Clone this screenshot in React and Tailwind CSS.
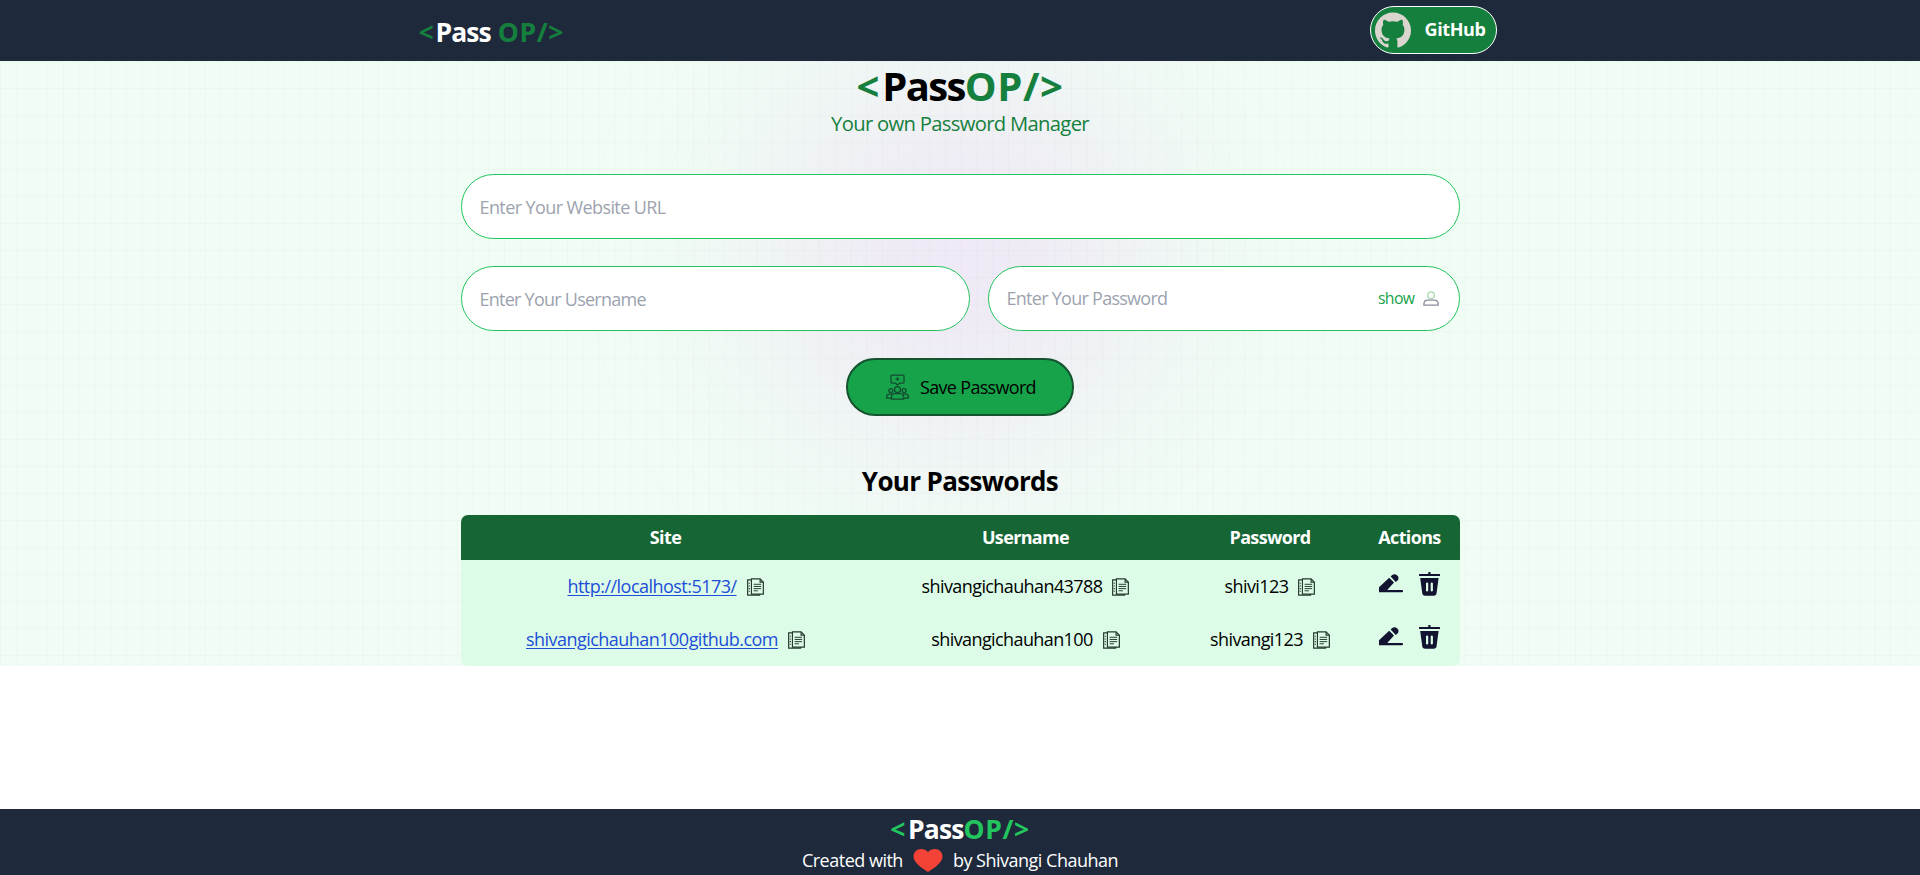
import React from "react";

const GITHUB =
  "M12 .297c-6.63 0-12 5.373-12 12 0 5.303 3.438 9.8 8.205 11.385.6.113.82-.258.82-.577 0-.285-.01-1.04-.015-2.04-3.338.724-4.042-1.61-4.042-1.61C4.422 18.07 3.633 17.7 3.633 17.7c-1.087-.744.084-.729.084-.729 1.205.084 1.838 1.236 1.838 1.236 1.07 1.835 2.809 1.305 3.495.998.108-.776.417-1.305.76-1.605-2.665-.3-5.466-1.332-5.466-5.93 0-1.31.465-2.38 1.235-3.22-.135-.303-.54-1.523.105-3.176 0 0 1.005-.322 3.3 1.23.96-.267 1.98-.399 3-.405 1.02.006 2.04.138 3 .405 2.28-1.552 3.285-1.23 3.285-1.23.645 1.653.24 2.873.12 3.176.765.84 1.23 1.91 1.23 3.22 0 4.61-2.805 5.625-5.475 5.92.42.36.81 1.096.81 2.22 0 1.606-.015 2.896-.015 3.286 0 .315.21.69.825.57C20.565 22.092 24 17.592 24 12.297c0-6.627-5.373-12-12-12";

function CopyIcon() {
  return (
    <svg className="h-[18px] w-[17px] shrink-0" viewBox="0.400 0.800 15.700 16.400" fill="none" stroke="#26392f" strokeWidth="1.100">
      <path d="M4.500 1.500h8l3 3v11h-11z" />
      <path d="M12.500 1.500v3h3M4.500 2.500h-3.500v14h11v-1" />
      <path d="M6.500 6.500h7M6.500 8.500h7M6.500 10.500h7M6.500 12.500h4" strokeWidth=".9" />
      <path d="M2.500 5v10" strokeDasharray="1 1.500" />
    </svg>
  );
}

function EditIcon() {
  return (
    <svg className="h-[19px] w-6" viewBox="0 0 24 19" fill="#121331">
      <path d="M0 13.300 10.200 3.700 15 8.400 8.200 16H23a1 1 0 0 1 0 2.300H0z" />
      <path d="M11.600 2.500 13.200 1.100A3.900 3.900 0 0 1 19 6l-2.200 1.900z" />
    </svg>
  );
}

function TrashIcon() {
  return (
    <svg className="h-6 w-[21px]" viewBox="0 0 21 24" fill="#121331">
      <path d="M9.200 2V1a1.200 1.200 0 0 1 2.400 0v1H20.300a.9.9 0 0 1 0 2.100H.7A.9.9 0 0 1 .7 2z" />
      <path
        fillRule="evenodd"
        d="M1.200 6h18.400l-2 15a3 3 0 0 1-3 2.700H6.200a3 3 0 0 1-3-2.700zM7 11.500v7a1 1 0 0 0 2.200 0v-7a1 1 0 0 0-2.200 0m4.700 0v7a1 1 0 0 0 2.200 0v-7a1 1 0 0 0-2.200 0"
      />
    </svg>
  );
}

function UserIcon() {
  return (
    <svg className="h-[15px] w-4" viewBox="0 0 16 15" fill="none" strokeWidth="1.300">
      <circle cx="8" cy="4.200" r="3.400" stroke="#a9d8b0" />
      <path d="M.9 14.100v-1.200a4 4 0 0 1 4-3.800h6.200a4 4 0 0 1 4 3.800v1.200z" stroke="#8d8b9b" />
    </svg>
  );
}

function GroupIcon() {
  return (
    <svg className="h-[26px] w-[23px]" viewBox="0 0 23 26" fill="none" stroke="#144a30" strokeWidth="1.250">
      <path d="M6 1h11a1 1 0 0 1 1 1v6a1 1 0 0 1-1 1h-3.500l-2 2-2-2H6a1 1 0 0 1-1-1V2a1 1 0 0 1 1-1zM11.500 3.200v3.600M9.700 5h3.600" />
      <circle cx="11.500" cy="15.500" r="3" />
      <circle cx="4.900" cy="16.500" r="2" />
      <circle cx="18.100" cy="16.500" r="2" />
      <path d="M5.500 25v-2.500a3 3 0 0 1 3-3h6a3 3 0 0 1 3 3V25zM5.500 24H.7v-1.500a2.500 2.500 0 0 1 2.500-2.500h3M17.500 24h4.800v-1.500a2.500 2.500 0 0 0-2.500-2.500h-3" />
    </svg>
  );
}

function Cell({ text, link }) {
  return (
    <td className="h-[53px] p-0">
      <div className="flex items-center justify-center gap-[10px]">
        {link ? (
          <a href="#" className="tracking-[-0.530px] text-[#1d4ed8] underline underline-offset-2">{text}</a>
        ) : (
          <span>{text}</span>
        )}
        <CopyIcon />
      </div>
    </td>
  );
}

const rows = [
  ["http://localhost:5173/", "shivangichauhan43788", "shivi123"],
  ["shivangichauhan100github.com", "shivangichauhan100", "shivangi123"],
];

const field =
  "h-[65px] rounded-full border border-[#22c55e] bg-white px-[18px] outline-none placeholder:text-[#9ca3af] placeholder:opacity-100";

export default function App() {
  return (
    <div className="flex h-[875px] flex-col overflow-hidden bg-white font-['Open_Sans',sans-serif] text-[18px] leading-[27px] tracking-[-0.600px] text-black">
      <header className="flex h-[61px] shrink-0 justify-center bg-[#1e293b]">
        <div className="flex w-[1083px] items-center justify-between">
          <div className="mt-[3px] text-[26.500px] font-bold tracking-[-0.900px] text-white">
            <span className="mr-[1px] tracking-[0.800px] text-[#15803d]">&lt;</span>Pass{" "}
            <span className="ml-px tracking-[0.600px] text-[#15803d]">OP/&gt;</span>
          </div>
          <button className="mb-[2px] mr-[5px] flex h-[48px] w-[127px] items-center rounded-full border border-white bg-[#15803d] pl-1 font-bold text-white">
            <svg className="h-9 w-9 shrink-0" viewBox="0 0 24 24" fill="#dbd5cf">
              <path d={GITHUB} />
            </svg>
            <span className="ml-[14px] tracking-[-0.400px]">GitHub</span>
          </button>
        </div>
      </header>

      <main className="relative isolate flex h-[605px] shrink-0 flex-col items-center bg-[#f0fdf4]">
        <div className="absolute inset-0 -z-10 overflow-hidden bg-[linear-gradient(to_right,#8080800a_1px,transparent_1px),linear-gradient(to_bottom,#8080800a_1px,transparent_1px)] bg-[size:15.750px_27px]">
          <div className="absolute left-[785px] top-[22px] h-[349px] w-[349px] rounded-full bg-[#e879f9] opacity-20 blur-[112px]" />
        </div>

        <h1 className="mt-[2px] text-[40px] font-bold leading-[45px] tracking-[-1.600px]">
          <span className="mr-[2px] tracking-[0.800px] text-[#15803d]">&lt;</span>Pass
          <span className="tracking-[0.600px] text-[#15803d]">OP/&gt;</span>
        </h1>
        <p className="text-[20.250px] leading-[31px] tracking-[-0.700px] text-[#15803d]">Your own Password Manager</p>

        <div className="mt-[35px] flex w-[999px] flex-col gap-[27px]">
          <input className={field} placeholder="Enter Your Website URL" />
          <div className="flex gap-[18px]">
            <input className={`${field} w-[509px] tracking-[-0.750px]`} placeholder="Enter Your Username" />
            <div className="flex h-[65px] w-[472px] items-center rounded-full border border-[#22c55e] bg-white pl-[18px] pr-[20px]">
              <input className="min-w-0 flex-1 tracking-[-0.730px] outline-none placeholder:text-[#9ca3af] placeholder:opacity-100" placeholder="Enter Your Password" />
              <span className="mr-2 text-[15.800px] text-[#16a34a]">show</span>
              <UserIcon />
            </div>
          </div>
        </div>
        <button className="mt-[27px] flex h-[58px] w-[228px] shrink-0 items-center rounded-full border-2 border-[#14532d] bg-[#16a34a] pl-[38px]">
          <GroupIcon />
          <span className="ml-[11px] tracking-[-0.680px]">Save Password</span>
        </button>

        <h2 className="mt-[47px] text-[26px] font-bold leading-[36px] tracking-[-0.650px]">Your Passwords</h2>
        <div className="mt-[16px] w-[999px] overflow-hidden rounded-[7px]">
          <table className="w-full table-fixed border-collapse text-center">
            <colgroup>
              <col className="w-[410px]" />
              <col className="w-[310px]" />
              <col className="w-[179px]" />
              <col className="w-[100px]" />
            </colgroup>
            <thead className="bg-[#166534] text-white">
              <tr>
                {["Site", "Username", "Password", "Actions"].map((h) => (
                  <th key={h} className="h-[45px] p-0 font-bold tracking-[-0.650px]">{h}</th>
                ))}
              </tr>
            </thead>
            <tbody className="bg-[#dcfce7]">
              {rows.map((r) => (
                <tr key={r[0]}>
                  <Cell text={r[0]} link />
                  <Cell text={r[1]} />
                  <Cell text={r[2]} />
                  <td className="h-[53px] p-0">
                    <div className="flex items-center justify-center gap-4 pb-[6px]">
                      <EditIcon />
                      <TrashIcon />
                    </div>
                  </td>
                </tr>
              ))}
            </tbody>
          </table>
        </div>
      </main>

      <footer className="mt-auto flex h-[66px] shrink-0 flex-col items-center bg-[#1e293b] text-white">
        <div className="mt-[2px] text-[26.500px] font-bold leading-[36px] tracking-[-0.900px]">
          <span className="mr-[2px] tracking-[0.600px] text-[#22c55e]">&lt;</span>Pass
          <span className="tracking-[0.600px] text-[#22c55e]">OP/&gt;</span>
        </div>
        <div className="flex items-center tracking-[-0.500px]">
          Created with
          <svg className="mx-[10px] h-[23px] w-[30px]" viewBox="0 0 30 23" fill="#f44336">
            <path d="M15 23C8 18.500.5 13.500.5 7.500.5 3 4 0 8 0c3 0 5.500 1.200 7 3.200C16.500 1.200 19 0 22 0c4 0 7.500 3 7.500 7.500C29.500 13.500 22 18.500 15 23z" />
          </svg>
          by Shivangi Chauhan
        </div>
      </footer>
    </div>
  );
}
